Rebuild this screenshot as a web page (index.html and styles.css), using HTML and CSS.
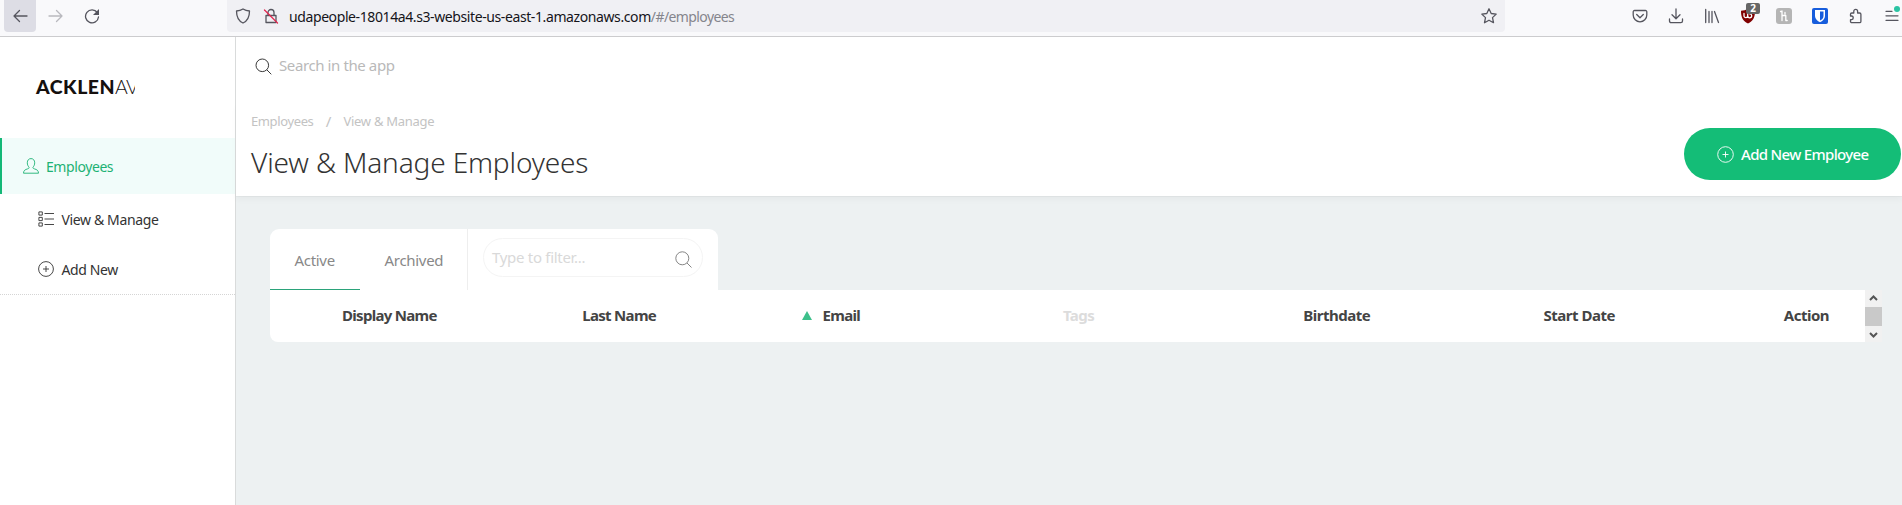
FILE: index.html
```html
<!DOCTYPE html>
<html lang="en">
<head>
<meta charset="utf-8">
<title>View &amp; Manage Employees</title>
<link rel="stylesheet" href="styles.css">
</head>
<body>
<header class="toolbar">
  <div class="nav">
    <span class="nav-btn current"><svg width="16" height="16" viewBox="0 0 16 16"><path d="M15 8H2M7.5 2.5L2 8l5.500 5.500"/></svg></span>
    <span class="nav-btn dim"><svg width="16" height="16" viewBox="0 0 16 16"><path d="M1 8h13M8.500 2.500L14 8l-5.500 5.500"/></svg></span>
    <span class="nav-btn"><svg width="16" height="16" viewBox="0 0 16 16"><path d="M13.300 4.500A6.500 6.500 0 1 0 14.500 9"/><path class="solid" d="M15 1v6H9z"/></svg></span>
  </div>
  <div class="urlbar">
    <svg class="shield" width="16" height="16" viewBox="0 0 16 16"><path d="M8 1C6 2.300 4 2.900 1.500 3c0 5 1.300 9.700 6.500 12 5.200-2.300 6.500-7 6.500-12C12 2.900 10 2.300 8 1z"/></svg>
    <svg class="lock" width="16" height="16" viewBox="0 0 16 16"><path d="M3 7.500h10v7H3zM5 7.500V4.500a3 3 0 0 1 6 0v3"/><path class="slash" d="M1.500 2l13 13"/></svg>
    <span class="url"><span class="host">udapeople-18014a4.s3-website-us-east-1.amazonaws.com</span><span class="path">/#/employees</span></span>
    <svg class="star" width="18" height="18" viewBox="0 0 18 18"><path d="M9 1.800l2.200 4.700 5 .6-3.700 3.500 1 5.100L9 13.200l-4.500 2.500 1-5.100L1.800 7.100l5-.6z"/></svg>
  </div>
  <div class="tools">
    <svg width="16" height="16" viewBox="0 0 16 16"><path d="M2.500 2.500h11a1.300 1.300 0 0 1 1.300 1.300V7a6.800 6.800 0 0 1-13.600 0V3.800a1.300 1.300 0 0 1 1.300-1.300zM4.700 6.500L8 9.700l3.300-3.200"/></svg>
    <svg width="16" height="16" viewBox="0 0 16 16"><path d="M8 1v9.500M4 6.700l4 4 4-4M1.500 11v2a1.700 1.700 0 0 0 1.700 1.700h9.600a1.700 1.700 0 0 0 1.700-1.700v-2"/></svg>
    <svg width="16" height="16" viewBox="0 0 16 16"><path d="M1.700 1.500v13M5 3.500v11M8 3.500v11M10.500 3.500l4 11"/></svg>
    <span class="ublock"><svg width="16" height="16" viewBox="0 0 16 16"><path class="red" d="M8 .5C6 2 3.500 2.700 1 2.800c0 6 1.500 10.200 7 12.700 5.500-2.500 7-6.700 7-12.700C12.500 2.700 10 2 8 .5z"/><path class="wh" d="M4 5.500v2.300a1.700 1.700 0 0 0 3.700 0V5.500v2.300a1.900 1.900 0 0 0 4 0 1.900 1.900 0 0 0-2-2"/></svg><b class="badge">2</b></span>
    <svg width="16" height="16" viewBox="0 0 16 16"><rect class="gray" width="16" height="16" rx="3"/><path class="wh" d="M6 3v9.500M4.500 3.500H6M6 7.500h3.800v5h1.400M9 4.500v1.500"/></svg>
    <svg width="16" height="16" viewBox="0 0 16 16"><rect class="blue" width="16" height="16" rx="2"/><path class="white" d="M3 2h10v6c0 3-2.500 5-5 6.300C5.500 13 3 11 3 8z"/><path class="blue" d="M8 3.500h3.500V8c0 2-1.500 3.500-3.500 4.600z"/></svg>
    <svg width="16" height="16" viewBox="0 0 16 16"><path d="M2.500 8V6.300A1.300 1.300 0 0 1 3.800 5h2V3.200a1.900 1.900 0 0 1 3.800 0V5h2a1.300 1.300 0 0 1 1.300 1.300v7.100a1.300 1.300 0 0 1-1.300 1.300H3.800a1.300 1.300 0 0 1-1.300-1.300v-1.700h1.300a1.900 1.900 0 0 0 0-3.700z"/></svg>
    <span class="menu"><svg width="16" height="16" viewBox="0 0 16 16"><path d="M2 3.300h6M2 7.800h12M2 12.300h12"/></svg><i></i></span>
  </div>
</header>
<div class="app">
  <aside class="sidebar">
    <div class="logo"><b>ACKLEN</b><span>AV</span></div>
    <div class="item active"><svg width="16" height="16" viewBox="0 0 16 16"><path d="M8 .6c2.300 0 3.700 1.700 3.700 4.200 0 1.800-.7 3.400-1.700 4.300-.3 1 .2 1.400 1.500 1.800 2.300.7 3.900 1.400 4 4.300H.5c.1-2.900 1.700-3.600 4-4.300 1.300-.4 1.800-.8 1.500-1.800-1-.9-1.700-2.500-1.700-4.300C4.300 2.300 5.700.6 8 .6z"/></svg><span>Employees</span></div>
    <div class="item sub"><svg width="16" height="16" viewBox="0 0 16 16"><path d="M.9.900h3.400v3.200H.9zM.9 6.400h3.400v3.200H.9zM.9 11.900h3.400v3.200H.9zM6.500 2.500H16M6.500 8H16M6.500 13.500H16"/></svg><span>View &amp; Manage</span></div>
    <div class="item sub last"><svg width="16" height="16" viewBox="0 0 16 16"><circle cx="8" cy="8" r="7.400"/><path d="M8 5v6M5 8h6"/></svg><span>Add New</span></div>
  </aside>
  <main class="main">
    <div class="search"><svg width="17" height="17" viewBox="0 0 17 17"><circle cx="7.300" cy="7.300" r="6.300"/><path d="M11.800 11.800l4.500 4.500"/></svg><span>Search in the app</span></div>
    <div class="head">
      <div class="titles">
        <div class="crumbs"><span>Employees</span><span class="sep">/</span><span class="here">View &amp; Manage</span></div>
        <h1>View &amp; Manage Employees</h1>
      </div>
      <div class="add"><svg width="17" height="17" viewBox="0 0 17 17"><circle cx="8.500" cy="8.500" r="7.800"/><path d="M8.500 5.500v6M5.500 8.500h6"/></svg><span>Add New Employee</span></div>
    </div>
    <div class="body">
      <div class="tabs">
        <div class="tab on">Active</div>
        <div class="tab second">Archived</div>
        <div class="filter"><div class="pill"><span>Type to filter...</span><svg width="17" height="17" viewBox="0 0 17 17"><circle cx="7.300" cy="7.300" r="6.500"/><path d="M12 12l4.500 4.500"/></svg></div></div>
      </div>
      <div class="tablewrap">
        <div class="table">
          <span class="tight">Display Name</span><span class="tight">Last Name</span><span class="sorted tight"><i></i><span>Email</span></span><span class="muted">Tags</span><span>Birthdate</span><span>Start Date</span><span>Action</span>
        </div>
        <div class="scroll"><svg width="9" height="6" viewBox="0 0 9 6"><path d="M1 5l3.500-3.500L8 5"/></svg><i></i><svg width="9" height="6" viewBox="0 0 9 6"><path d="M1 1l3.500 3.500L8 1"/></svg></div>
      </div>
    </div>
  </main>
</div>
</body>
</html>
```
FILE: styles.css
```css
* { box-sizing: border-box; }
body { margin: 0; width: 1902px; height: 505px; overflow: hidden; font-family: "Noto Sans", "Open Sans", sans-serif; font-size: 15px; color: #3c3c3c; background: #fff; }
svg { display: block; flex: none; fill: none; stroke: currentColor; }
span, h1, .tab { white-space: nowrap; }

.toolbar { display: flex; height: 37px; background: #f9f9fb; border-bottom: 1px solid #ccccce; color: #55555e; }
.toolbar svg { stroke-width: 1.3; stroke-linecap: round; stroke-linejoin: round; }
.nav { display: flex; gap: 4px; padding-left: 4px; width: 227px; }
.nav-btn { display: flex; align-items: center; justify-content: center; width: 32px; height: 32px; border-radius: 0 0 4px 4px; }
.nav-btn.current { background: #dddde5; }
.nav-btn.dim { color: #b9b9be; }
.solid { fill: currentColor; stroke: none; }
.urlbar { display: flex; align-items: center; width: 1278px; height: 32px; padding: 0 7px 0 8px; background: #f0f0f4; border-radius: 0 0 4px 4px; }
.lock { margin: 0 10px 0 12px; }
.slash { stroke: #e22850; }
.url { flex: 1; padding-top: 2px; font-size: 14px; line-height: 30px; letter-spacing: -.4px; color: #15141a; }
.path { color: #85858c; letter-spacing: -.6px; }
.tools { display: flex; align-items: center; gap: 20px; height: 32px; padding-left: 127px; }
.tools .red { fill: #800000; stroke: none; }
.tools .wh { stroke: #fff; }
.tools .gray { fill: #b5b5b5; stroke: none; }
.tools .blue { fill: #175ddc; stroke: none; }
.tools .white { fill: #fff; stroke: none; }
.ublock, .menu { position: relative; }
.badge { position: absolute; left: 6px; top: -5px; width: 14px; height: 11px; border-radius: 2px; background: #666; color: #fff; font-size: 10px; line-height: 11px; text-align: center; }
.menu i { position: absolute; left: 10px; top: -2px; width: 6px; height: 6px; border-radius: 50%; background: #2ac3a2; }

.app { display: flex; height: 468px; }
.app svg { stroke-width: .9; }
.sidebar { width: 236px; border-right: 1px solid #d9dbdb; }
.logo { width: 135px; height: 101px; padding: 36px 0 0 36px; overflow: hidden; white-space: nowrap; font-family: Lato, sans-serif; font-size: 19.500px; line-height: 28px; color: #15100e; }
.logo b { font-weight: 900; letter-spacing: .5px; }
.logo span { font-weight: 300; letter-spacing: -1px; }
.item { display: flex; align-items: center; gap: 8px; height: 50px; padding-left: 37.500px; font-size: 14px; letter-spacing: -.37px; color: #333; }
.item.active { gap: 7px; height: 56px; padding-left: 21px; border-left: 2px solid #14b877; background: #f1fcfa; letter-spacing: -.42px; color: #1db274; }
.item.last { height: 51px; border-bottom: 1px dotted #d5d5d5; }

.main { flex: 1; display: flex; flex-direction: column; background: #edf1f2; }
.search { display: flex; align-items: center; gap: 7px; height: 66px; padding: 0 0 10px 19px; background: #fff; color: #b9b9b9; letter-spacing: -.4px; }
.search svg { margin-top: 3px; color: #222; }
.head { display: flex; justify-content: space-between; height: 93px; padding: 9px 1px 0 15px; background: #fff; box-shadow: 0 4px 6px rgba(0,0,0,.03), 0 1px 0 rgba(0,0,0,.03); }
.crumbs { display: flex; font-size: 13px; line-height: 19px; letter-spacing: -.38px; color: #c3c3c3; }
.here { letter-spacing: -.27px; }
.sep { width: 30px; font-size: 15px; text-align: center; }
h1 { margin: 0; font-size: 28px; font-weight: 300; line-height: 63px; letter-spacing: -.14px; color: #333; }
.add { display: flex; align-items: center; gap: 7px; width: 217px; height: 52px; margin-top: 16px; padding-left: 33px; border-radius: 26px; background: #14bd77; color: #fff; font-weight: 500; letter-spacing: -.68px; }
.add span { padding-bottom: 1px; }
.body { flex: 1; padding: 33px 0 0 34px; }
.tabs { display: flex; width: 448px; height: 61px; border-radius: 9px 9px 0 0; background: #fff; color: #888; letter-spacing: -.3px; }
.tab { display: flex; align-items: center; width: 90px; height: 61px; padding-left: 24.500px; }
.tab.on { padding-top: 1px; border-bottom: 1px solid #2ba37a; }
.tab.second { width: 108px; border-right: 1px solid #eee; }
.filter { padding: 9px 0 0 15px; }
.pill { display: flex; align-items: center; justify-content: space-between; width: 220px; height: 39px; padding: 0 10px 0 8px; border: 1px solid #f4f4f4; border-radius: 20px; color: #d9d9d9; }
.pill span { padding-bottom: 2px; }
.pill svg { margin-top: 3px; color: #777; }
.tablewrap { display: flex; height: 52px; }
.table { display: grid; grid-template-columns: repeat(7, 240.300px); align-items: center; width: 1595px; padding: 0 0 2px 72px; border-radius: 0 0 0 8px; background: #fff; color: #444; font-weight: 700; letter-spacing: -.48px; overflow: hidden; }
.tight { letter-spacing: -.7px; }
.sorted { display: flex; align-items: center; gap: 11px; margin-left: -21px; }
.sorted i { border: 5px solid transparent; border-top: 0; border-bottom: 9px solid #3dc08b; }
.muted { color: #dcdcdc; }
.scroll { display: flex; flex-direction: column; align-items: center; justify-content: space-between; width: 17px; padding: 5px 0 4px; background: #f1f1f1; color: #555; }
.scroll svg { stroke-width: 2; }
.scroll i { width: 17px; height: 19px; background: #c9c9c9; }
```
